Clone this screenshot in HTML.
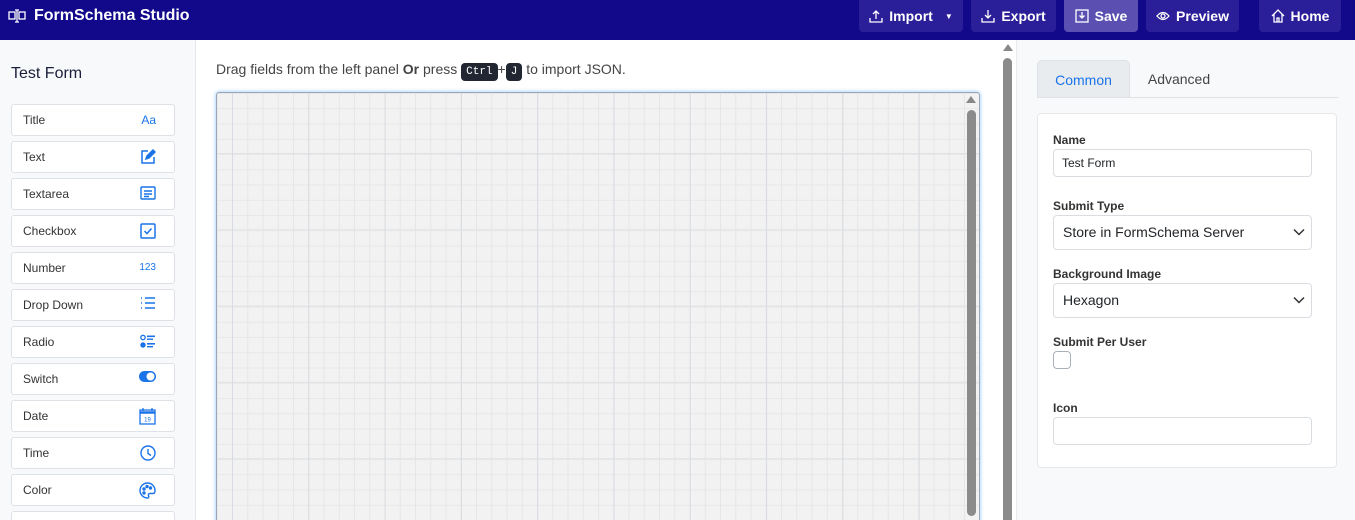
<!DOCTYPE html>
<html style="width:1355px;height:520px;overflow:hidden"><head><meta charset="utf-8"><style>
*{box-sizing:border-box;margin:0;padding:0}
body{width:1355px;height:520px;overflow:hidden;font-family:"Liberation Sans",Arial,sans-serif;background:#fff;position:relative;color:#212529}
.nav{position:absolute;left:0;top:0;width:1355px;height:40px;background:#11088a}
.brand{position:absolute;left:8px;top:7px;color:#fff;font-weight:bold;font-size:16px;display:flex;align-items:center;gap:8px}
.btn{position:absolute;top:0;height:32px;border-radius:0 0 4px 4px;background:#2a1f99;color:#fff;font-weight:bold;font-size:14px;display:flex;align-items:center;justify-content:center;gap:6px}
.left{position:absolute;left:0;top:40px;width:196px;height:480px;background:#f8f9fa;border-right:1px solid #e5e7eb;overflow:hidden}
.left h2{position:absolute;left:11px;top:25px;font-weight:normal;font-size:16px;color:#1b1f3b}
.item{position:absolute;left:11px;width:164px;height:32px;background:#fff;border:1px solid #dee2e6;border-radius:3px;font-size:12px;color:#333;padding-left:11px;line-height:30px}
.item svg,.item span.ic{position:absolute;right:18px;top:7px}
.hint{position:absolute;left:216px;top:61px;font-size:14px;color:#444}
kbd{display:inline-block;background:#222633;color:#fff;font-family:"Liberation Mono",monospace;font-size:11px;padding:2px 5px;border-radius:4px;line-height:14px}
.canvas{position:absolute;left:216px;top:92px;width:764px;height:440px;border:1px solid #9aa7b8;border-radius:3px;box-shadow:0 0 4px #8fc1ff;
background-color:#f2f2f2;
background-image:linear-gradient(90deg,#d8dbe1 1px,transparent 1px),linear-gradient(#e0e2e6 1px,transparent 1px),linear-gradient(90deg,#e6e6e6 1px,transparent 1px),linear-gradient(#e8e8e8 1px,transparent 1px);
background-size:76.3px 76.3px,76.3px 76.3px,15.26px 15.26px,15.26px 15.26px;background-position:15px 0,0 60px,15px 0,0 0}
.right{position:absolute;left:1016px;top:40px;width:339px;height:480px;background:#f8f9fa;border-left:1px solid #e9ecef}
.tab{position:absolute;top:20px;height:38px;font-size:14px;line-height:38px;text-align:center}
.card{position:absolute;left:20px;top:73px;width:300px;height:355px;background:#fff;border:1px solid #e5e7eb;border-radius:4px}
.lbl{position:absolute;left:15px;font-size:12px;font-weight:bold;color:#333}
.inp{position:absolute;left:15px;width:259px;border:1px solid #d9dde2;border-radius:4px;background:#fff;font-size:12px;padding-left:8px}
.sel{font-size:14px;padding-left:9px}
.sel svg{position:absolute;right:6px;top:12px}
.wrap{position:absolute;left:0;top:0;width:1355px;height:520px;overflow:hidden}
</style></head><body><div class="wrap">
<div class="nav">
 <div class="brand"><svg width="18" height="14" viewBox="0 0 18 14" fill="none" stroke="#fff" stroke-width="1.3"><rect x="1" y="3" width="6" height="7"/><rect x="11" y="3" width="6" height="7"/><path d="M9 1v12M7 1h4M7 13h4"/></svg>FormSchema Studio</div>
 <div class="btn" style="left:859px;width:104px"><svg width="14" height="14" viewBox="0 0 14 14" fill="none" stroke="#fff" stroke-width="1.3"><path d="M7 10V2M4 5l3-3 3 3M1 9v4h12V9"/></svg>Import <span style="font-size:8px;margin-left:6px">▼</span></div>
 <div class="btn" style="left:971px;width:85px"><svg width="14" height="14" viewBox="0 0 14 14" fill="none" stroke="#fff" stroke-width="1.3"><path d="M7 1v8M4 6l3 3 3-3M1 9v4h12V9"/></svg>Export</div>
 <div class="btn" style="left:1064px;width:74px;background:#5b4fb1"><svg width="14" height="14" viewBox="0 0 14 14" fill="none" stroke="#fff" stroke-width="1.3"><rect x="1" y="1" width="12" height="12"/><path d="M7 3v6M4.5 6.5 7 9l2.5-2.5"/></svg>Save</div>
 <div class="btn" style="left:1146px;width:93px"><svg width="14" height="10" viewBox="0 0 14 10" fill="none" stroke="#fff" stroke-width="1.3"><path d="M1 5q6-7 12 0q-6 7-12 0z"/><circle cx="7" cy="5" r="2"/></svg>Preview</div>
 <div class="btn" style="left:1259px;width:82px"><svg width="14" height="14" viewBox="0 0 14 14" fill="none" stroke="#fff" stroke-width="1.3"><path d="M1 7 7 1l6 6M3 5v8h8V5M6 13V9h2v4"/></svg>Home</div>
</div>
<div class="left">
 <h2>Test Form</h2>
 <div class="item" style="top:64px">Title<span class="ic" style="color:#1a73e8;font-size:12px;top:0">Aa</span></div>
 <div class="item" style="top:101px">Text<svg width="16" height="16" viewBox="0 0 16 16" fill="none" stroke="#1a73e8" stroke-width="1.5"><path d="M8 2H2v12h12V8"/><path d="M6 10l1-3 6-6 2 2-6 6z" fill="#1a73e8"/></svg></div>
 <div class="item" style="top:138px">Textarea<svg width="16" height="14" viewBox="0 0 16 14" fill="none" stroke="#1a73e8" stroke-width="1.4"><rect x="1" y="1" width="14" height="12" rx="1"/><path d="M4 5h8M4 8h8M4 10.5h5"/></svg></div>
 <div class="item" style="top:175px">Checkbox<svg width="16" height="16" viewBox="0 0 16 16" fill="none" stroke="#1a73e8" stroke-width="1.5"><rect x="1" y="1" width="14" height="14" rx="1"/><path d="M4.5 8l2.5 2.5 4.5-5"/></svg></div>
 <div class="item" style="top:212px">Number<span class="ic" style="color:#1a73e8;font-size:10px;top:0">123</span></div>
 <div class="item" style="top:249px">Drop Down<svg width="16" height="12" viewBox="0 0 16 12" fill="none" stroke="#1a73e8" stroke-width="1.4"><path d="M1 1h1M1 6h1M1 11h1M5 1h10M5 6h10M5 11h10"/></svg></div>
 <div class="item" style="top:286px">Radio<svg width="16" height="15" viewBox="0 0 16 15" fill="#1a73e8"><circle cx="3" cy="3.5" r="2.2" fill="none" stroke="#1a73e8" stroke-width="1.3"/><circle cx="3" cy="11" r="2.7"/><rect x="7" y="1.5" width="8" height="1.6"/><rect x="7" y="4.5" width="6" height="1.4"/><rect x="7" y="9" width="8" height="1.6"/><rect x="7" y="12" width="6" height="1.4"/></svg></div>
 <div class="item" style="top:323px">Switch<svg width="17" height="11" viewBox="0 0 17 11"><rect x="0" y="0" width="17" height="11" rx="5.5" fill="#1a73e8"/><circle cx="11.5" cy="5.5" r="4" fill="#fff"/></svg></div>
 <div class="item" style="top:360px">Date<svg width="17" height="17" viewBox="0 0 17 17" fill="none" stroke="#1a73e8" stroke-width="1.3"><rect x="1" y="2" width="15" height="14"/><path d="M1 4.5h15" stroke-width="2.5"/><path d="M4 0v3M13 0v3"/><text x="8.5" y="13.5" font-size="6" text-anchor="middle" fill="#1a73e8" stroke="none" font-family="Liberation Sans">19</text></svg></div>
 <div class="item" style="top:397px">Time<svg width="16" height="16" viewBox="0 0 16 16" fill="none" stroke="#1a73e8" stroke-width="1.4"><circle cx="8" cy="8" r="7"/><path d="M8 4v4.5l3 2"/></svg></div>
 <div class="item" style="top:434px">Color<svg width="17" height="17" viewBox="0 0 17 17" fill="none" stroke="#1a73e8" stroke-width="1.4"><path d="M8.5 1a7.5 7.5 0 1 0 0 15c1.5 0 1.5-1.5 1-2.5s0-2 1.5-2H14c1.5 0 2-1 2-3A7.5 7.5 0 0 0 8.5 1z"/><circle cx="5" cy="7" r="1" fill="#1a73e8"/><circle cx="8" cy="4.5" r="1" fill="#1a73e8"/><circle cx="11.5" cy="6" r="1" fill="#1a73e8"/><circle cx="5" cy="11" r="1" fill="#1a73e8"/></svg></div>
 <div class="item" style="top:471px"></div>
</div>
<div class="hint">Drag fields from the left panel <b>Or</b> press <kbd>Ctrl</kbd>+<kbd>J</kbd> to import JSON.</div>
<div class="canvas"></div>
<div style="position:absolute;left:966px;top:96px;width:0;height:0;border-left:5px solid transparent;border-right:5px solid transparent;border-bottom:7px solid #888"></div>
<div style="position:absolute;left:967px;top:110px;width:9px;height:406px;background:#8b8b8b;border-radius:5px"></div>
<div style="position:absolute;left:1003px;top:44px;width:0;height:0;border-left:5px solid transparent;border-right:5px solid transparent;border-bottom:7px solid #888"></div>
<div style="position:absolute;left:1003px;top:58px;width:9px;height:470px;background:#8b8b8b;border-radius:5px"></div>
<div class="right">
 <div class="tab" style="left:20px;width:93px;background:#e9ecef;border:1px solid #dee2e6;border-bottom:none;border-radius:5px 5px 0 0;color:#1a73e8">Common</div>
 <div class="tab" style="left:113px;width:98px;color:#444">Advanced</div>
 <div style="position:absolute;left:20px;top:57px;width:301px;height:1px;background:#dee2e6"></div>
 <div class="card">
  <div class="lbl" style="top:19px">Name</div>
  <div class="inp" style="top:35px;height:28px;line-height:26px">Test Form</div>
  <div class="lbl" style="top:85px">Submit Type</div>
  <div class="inp sel" style="top:101px;height:35px;line-height:33px">Store in FormSchema Server<svg width="12" height="8" viewBox="0 0 12 8" fill="none" stroke="#333" stroke-width="1.5"><path d="M1 1.5l5 5 5-5"/></svg></div>
  <div class="lbl" style="top:153px">Background Image</div>
  <div class="inp sel" style="top:169px;height:35px;line-height:33px">Hexagon<svg width="12" height="8" viewBox="0 0 12 8" fill="none" stroke="#333" stroke-width="1.5"><path d="M1 1.5l5 5 5-5"/></svg></div>
  <div class="lbl" style="top:221px">Submit Per User</div>
  <div style="position:absolute;left:15px;top:237px;width:18px;height:18px;border:1px solid #aab0b8;border-radius:4px"></div>
  <div class="lbl" style="top:287px">Icon</div>
  <div class="inp" style="top:303px;height:28px"></div>
 </div>
</div>
</div></body></html>
